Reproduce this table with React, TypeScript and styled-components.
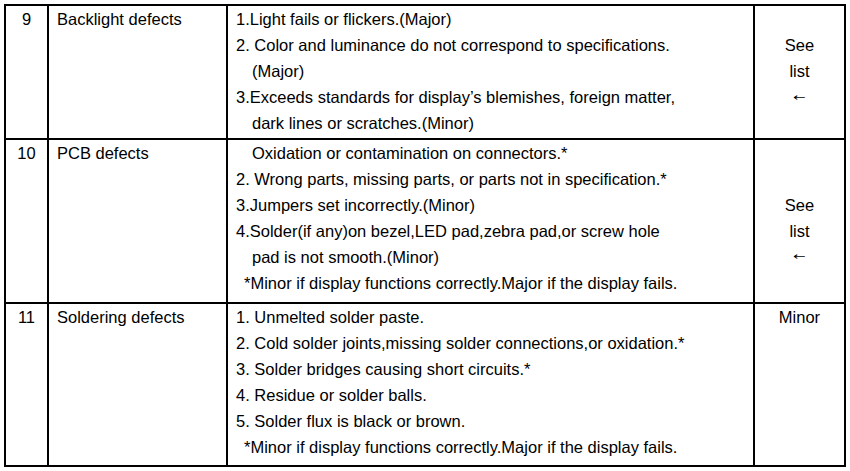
import styled, { createGlobalStyle } from "styled-components";

const GlobalStyle = createGlobalStyle`
  html, body {
    margin: 0;
    padding: 0;
    background: #fff;
  }
  body {
    font-family: "Liberation Sans", Arial, sans-serif;
    color: #000;
  }
`;

const Page = styled.div`
  padding: 4px 0 0 4px;
`;

const Table = styled.table`
  border-collapse: collapse;
  table-layout: fixed;
  width: 840px;
  font-size: 16.5px;
  line-height: 26px;
`;

const Col = styled.col<{ $width: number }>`
  width: ${(p) => p.$width}px;
`;

const Row = styled.tr<{ $height: number }>`
  height: ${(p) => p.$height}px;
`;

const Cell = styled.td`
  border: 2px solid #000;
  vertical-align: top;
  padding: 0;
`;

const NumCell = styled(Cell)`
  text-align: center;
`;

const NameCell = styled(Cell)`
  padding-left: 8px;
`;

const DescCell = styled(Cell)`
  padding-left: 8px;
`;

const GradeCell = styled(Cell)<{ $offset: number }>`
  text-align: center;
  padding-top: ${(p) => p.$offset}px;
`;

const Line = styled.div<{ $indent?: number }>`
  padding-left: ${(p) => p.$indent ?? 0}px;
  white-space: nowrap;
`;

const Arrow = styled.div`
  font-size: 15px;
  font-family: "DejaVu Sans", sans-serif;
  transform: scaleY(0.7);
`;

type Item = { text: string; indent?: number };

type Defect = {
  no: string;
  name: string;
  height: number;
  lines: Item[];
  grade: "list" | "minor";
  gradeOffset: number;
};

const footnote: Item = {
  text: "*Minor if display functions correctly.Major if the display fails.",
  indent: 8,
};

const defects: Defect[] = [
  {
    no: "9",
    name: "Backlight defects",
    height: 134,
    grade: "list",
    gradeOffset: 26,
    lines: [
      { text: "1.Light fails or flickers.(Major)" },
      { text: "2. Color and luminance do not correspond to specifications." },
      { text: "(Major)", indent: 16 },
      { text: "3.Exceeds standards for display’s blemishes, foreign matter," },
      { text: "dark lines or scratches.(Minor)", indent: 16 },
    ],
  },
  {
    no: "10",
    name: "PCB defects",
    height: 164,
    grade: "list",
    gradeOffset: 52,
    lines: [
      { text: "Oxidation or contamination on connectors.*", indent: 16 },
      { text: "2. Wrong parts, missing parts, or parts not in specification.*" },
      { text: "3.Jumpers set incorrectly.(Minor)" },
      { text: "4.Solder(if any)on bezel,LED pad,zebra pad,or screw hole" },
      { text: "pad is not smooth.(Minor)", indent: 16 },
      footnote,
    ],
  },
  {
    no: "11",
    name: "Soldering defects",
    height: 163,
    grade: "minor",
    gradeOffset: 0,
    lines: [
      { text: "1. Unmelted solder paste." },
      { text: "2. Cold solder joints,missing solder connections,or oxidation.*" },
      { text: "3. Solder bridges causing short circuits.*" },
      { text: "4. Residue or solder balls." },
      { text: "5. Solder flux is black or brown." },
      footnote,
    ],
  },
];

const App = () => {
  return (
    <Page>
      <GlobalStyle />
      <Table>
        <colgroup>
          <Col $width={43} />
          <Col $width={179} />
          <Col $width={527} />
          <Col $width={91} />
        </colgroup>
        <tbody>
          {defects.map((d) => (
            <Row key={d.no} $height={d.height}>
              <NumCell>{d.no}</NumCell>
              <NameCell>{d.name}</NameCell>
              <DescCell>
                {d.lines.map((l, i) => (
                  <Line key={i} $indent={l.indent}>
                    {l.text}
                  </Line>
                ))}
              </DescCell>
              <GradeCell $offset={d.gradeOffset}>
                {d.grade === "list" ? (
                  <>
                    <div>See</div>
                    <div>list</div>
                    <Arrow>←</Arrow>
                  </>
                ) : (
                  <div>Minor</div>
                )}
              </GradeCell>
            </Row>
          ))}
        </tbody>
      </Table>
    </Page>
  );
};

export default App;
